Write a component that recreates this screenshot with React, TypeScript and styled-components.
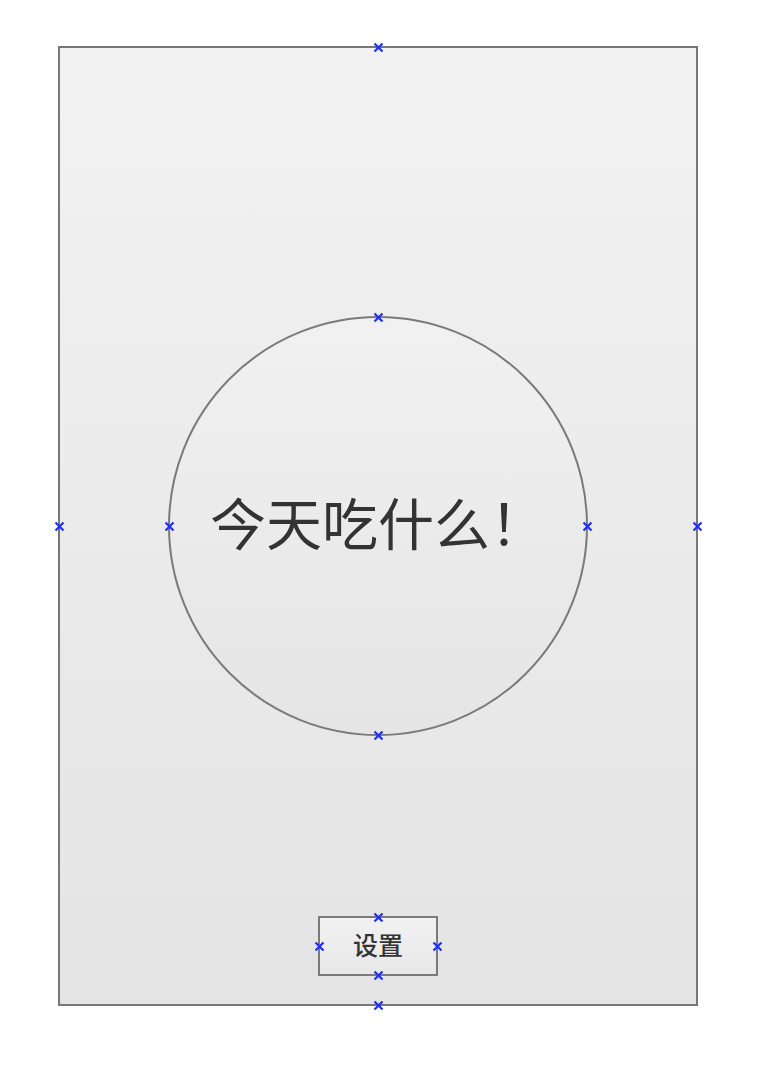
import styled, { createGlobalStyle } from "styled-components";

const GlobalStyle = createGlobalStyle`
  html, body {
    margin: 0;
    padding: 0;
    background: #ffffff;
    font-family: "Noto Sans CJK SC", "Noto Sans", sans-serif;
  }
`;

const Page = styled.div`
  padding: 46px 0 60px 58px;
`;

const Frame = styled.div`
  position: relative;
  box-sizing: border-box;
  width: 640px;
  height: 960px;
  border: 2px solid #777777;
  background: linear-gradient(to bottom, #f2f2f2, #e4e4e4);
  display: flex;
  flex-direction: column;
  align-items: center;
  padding: 88px 0 28px;
`;

const Stage = styled.div`
  flex: 1;
  display: flex;
  align-items: center;
  justify-content: center;
`;

const Circle = styled.div`
  position: relative;
  box-sizing: border-box;
  width: 420px;
  height: 420px;
  border-radius: 50%;
  border: 2px solid #7a7a7a;
  background: linear-gradient(to bottom, #f1f1f1, #e5e5e5);
  display: flex;
  align-items: center;
  justify-content: center;
`;

const Title = styled.span`
  font-size: 56px;
  line-height: 1;
  color: #333333;
  margin-top: -10px;
`;

const SettingsButton = styled.button`
  position: relative;
  box-sizing: border-box;
  width: 120px;
  height: 60px;
  border: 2px solid #7a7a7a;
  background: linear-gradient(to bottom, #f1f1f1, #e8e8e8);
  color: #333333;
  font-family: inherit;
  font-size: 25px;
  font-weight: 500;
  line-height: 1;
  padding: 0 0 4px;
  display: flex;
  align-items: center;
  justify-content: center;
`;

const MarkerBox = styled.span<{ $x: string; $y: string }>`
  position: absolute;
  display: block;
  left: ${(p) => p.$x};
  top: ${(p) => p.$y};
  width: 11px;
  height: 11px;
  margin: -5.5px 0 0 -5.5px;
  line-height: 0;
  pointer-events: none;
  z-index: 2;

  svg {
    display: block;
  }
`;

function Marker({ x, y }: { x: string; y: string }) {
  return (
    <MarkerBox $x={x} $y={y}>
      <svg width="11" height="11" viewBox="0 0 11 11">
        <path d="M1.5 1.5 L9.5 9.5 M9.5 1.5 L1.5 9.5" stroke="#1f30f0" strokeWidth="2.2" />
      </svg>
    </MarkerBox>
  );
}

function EdgeMarkers() {
  return (
    <>
      <Marker x="50%" y="-1px" />
      <Marker x="50%" y="calc(100% + 1px)" />
      <Marker x="-1px" y="50%" />
      <Marker x="calc(100% + 1px)" y="50%" />
    </>
  );
}

export default function App() {
  return (
    <Page>
      <GlobalStyle />
      <Frame>
        <EdgeMarkers />
        <Stage>
          <Circle>
            <EdgeMarkers />
            <Title>今天吃什么！</Title>
          </Circle>
        </Stage>
        <SettingsButton>
          <EdgeMarkers />
          设置
        </SettingsButton>
      </Frame>
    </Page>
  );
}
